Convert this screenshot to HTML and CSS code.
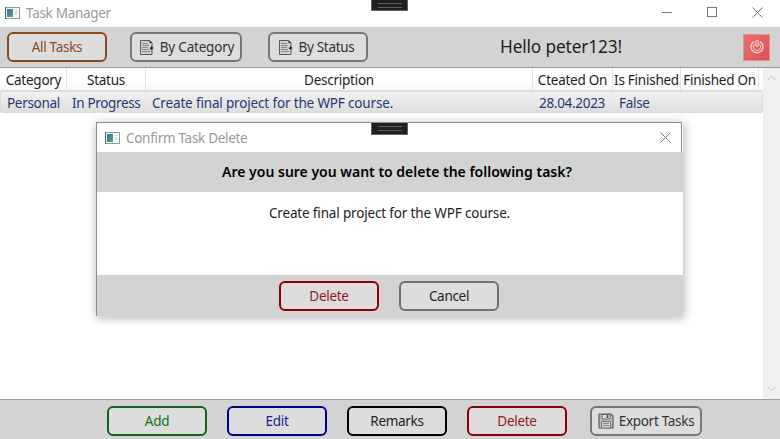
FILE: index.html
```
<!DOCTYPE html>
<html lang="en">
<head>
<meta charset="utf-8">
<title>Task Manager</title>
<link rel="stylesheet" href="styles.css">
</head>
<body>
<svg class="defs" width="0" height="0" aria-hidden="true">
  <defs>
    <linearGradient id="pane" x1="0" y1="0" x2="1" y2="1">
      <stop offset="0" stop-color="#3f6c94"/><stop offset="1" stop-color="#4fa684"/>
    </linearGradient>
    <symbol id="app" viewBox="0 0 15 12">
      <rect x=".5" y=".5" width="14" height="11" fill="#f7f9fa" stroke="#8b9ba3"/>
      <path d="M.5 0v12" stroke="#48606d"/>
      <rect x="2" y="2" width="6" height="8" fill="url(#pane)"/>
      <path d="M9.5 3.5h3M9.5 5.5h3M9.5 7.5h3" stroke="#cbd2d6"/>
    </symbol>
    <symbol id="doc" viewBox="0 0 15 17">
      <path d="M1.500 1.500h9l2.500 2.500v11.500H1.500z" fill="#cfcfcf" stroke="#5a5a5a"/>
      <path d="M10.500 1v3h3z" fill="#303030"/>
      <path d="M3 4.500h6M3 6.500h7M3 8.500h6M3 10.500h7M3 12.500h8" stroke="#8a8a8a"/>
      <path d="M11 8.500h1V7l2.500 2-2.500 2v-1h-1z" fill="#222"/>
    </symbol>
    <symbol id="disk" viewBox="0 0 16 16">
      <path d="M1 1h12l2 2v12H1z" fill="#bcbcbc" stroke="#5c5c5c" stroke-width="1.200"/>
      <path d="M4 1.500h8v4.500H4z" fill="#dedede" stroke="#666"/>
      <path d="M9.500 2v3" stroke="#444" stroke-width="1.500"/>
      <path d="M3.500 8.500h9V15h-9z" fill="#d4d4d4" stroke="#777"/>
      <path d="M5 10.500h6M5 12.500h6" stroke="#888"/>
    </symbol>
    <symbol id="close" viewBox="0 0 11 11"><path d="M.5.5l10 10M10.500.5l-10 10" stroke="#777" fill="none"/></symbol>
  </defs>
</svg>
<div class="window">
  <header class="titlebar">
    <svg class="app-icon"><use href="#app"/></svg>
    <span class="title">Task Manager</span>
    <div class="controls">
      <svg width="11" height="11"><path d="M0 5.500h10" stroke="#777"/></svg>
      <svg width="11" height="11"><rect x=".5" y=".5" width="9" height="9" fill="none" stroke="#777"/></svg>
      <svg width="11" height="11"><use href="#close"/></svg>
    </div>
    <div class="debug-tab"></div>
  </header>
  <div class="toolbar">
    <button class="btn brown">All Tasks</button>
    <button class="btn gray wide"><svg class="doc"><use href="#doc"/></svg>By Category</button>
    <button class="btn gray status"><svg class="doc"><use href="#doc"/></svg>By Status</button>
    <span class="hello">Hello peter123!</span>
    <button class="power" aria-label="Log out">
      <svg width="16" height="16" viewBox="0 0 16 16" fill="none" stroke="#ffdcdc">
        <path d="M5.200 2.500a6 6 0 1 0 5.600 0" stroke-width="1.200"/>
        <path d="M5.500 5.200a3.700 3.700 0 1 0 5 0" stroke-width="1"/>
        <rect x="6.800" y="1.500" width="2.400" height="6" rx="1.200"/>
      </svg>
    </button>
  </div>
  <main class="list">
    <div class="table">
      <div class="row head"><span>Category</span><span>Status</span><span>Description</span><span>Cteated On</span><span>Is Finished</span><span>Finished On</span></div>
      <div class="row item"><span>Personal</span><span class="progress">In Progress</span><span class="sentence">Create final project for the WPF course.</span><span>28.04.2023</span><span>False</span><span></span></div>
    </div>
    <div class="scroll">
      <svg width="9" height="6"><path d="M.7 5l3.800-4 3.800 4" fill="none" stroke="#c4c4c4"/></svg>
      <svg width="9" height="6"><path d="M.7 1l3.800 4 3.800-4" fill="none" stroke="#c4c4c4"/></svg>
    </div>
  </main>
  <footer class="footer">
    <button class="btn green">Add</button>
    <button class="btn blue">Edit</button>
    <button class="btn black">Remarks</button>
    <button class="btn red">Delete</button>
    <button class="btn gray wide"><svg class="disk"><use href="#disk"/></svg>Export Tasks</button>
  </footer>
  <section class="dialog">
    <div class="dialog-title">
      <svg class="app-icon"><use href="#app"/></svg>
      <span class="title">Confirm Task Delete</span>
      <svg class="dialog-close" width="11" height="11"><use href="#close"/></svg>
      <div class="debug-tab"></div>
    </div>
    <div class="question"><span>Are you sure you want to delete the following task?</span></div>
    <div class="message"><span class="sentence">Create final project for the WPF course.</span></div>
    <div class="actions"><button class="btn red">Delete</button><button class="btn dim">Cancel</button></div>
  </section>
</div>
</body>
</html>
```
FILE: styles.css
```
* { box-sizing: border-box; }
body { margin: 0; font: 13.5px/20px "Noto Sans", "Open Sans", sans-serif; letter-spacing: -.3px; color: #1d1d1d; }
svg { display: block; flex: none; }
.defs { position: absolute; }
.window { position: relative; width: 780px; height: 439px; overflow: hidden; background: #fff; display: flex; flex-direction: column; }
.titlebar { position: relative; height: 27px; flex: none; display: flex; align-items: center; padding: 0 17px 2px 5px; }
.app-icon { width: 15px; height: 12px; }
.title { margin-left: 6px; color: #999; }
.controls { margin-left: auto; display: flex; gap: 34px; }
.debug-tab { position: absolute; top: 0; left: 371px; width: 37px; height: 11px; background: #202020; border: solid #656565; border-width: 0 1px 1px; }
.debug-tab::after { content: ""; display: block; width: 24px; height: 3px; margin: 3px auto 0; border: solid #5c5c5c; border-width: 1px 0; }
.toolbar { height: 41px; flex: none; background: #d3d3d3; border-bottom: 1px solid #9a9b9d; display: flex; align-items: center; padding: 0 10px 0 7px; }
.btn { width: 100px; height: 30px; padding: 0; border: 2px solid; border-radius: 6px; background: #ddd; font: inherit; letter-spacing: inherit; display: flex; align-items: center; justify-content: center; flex: none; }
.wide { width: 112px; }
.toolbar .wide { margin: 0 26px 0 23px; letter-spacing: -.2px; padding-left: 1px; }
.brown { color: #8b4a1c; }
.gray { border-color: #777; color: #333; }
.dim { border-color: #707070; color: #222; }
.green { color: #14701c; border-color: #126313; }
.blue { color: #202092; border-color: #00008b; }
.black { color: #222; border-color: #000; }
.red { color: #921a1f; border-color: #8b0000; }
.doc { width: 15px; height: 17px; margin-right: 6px; }
.status .doc { margin-right: 5px; }
.status { padding-right: 3px; }
.disk { width: 16px; height: 16px; margin-right: 5px; }
.hello { margin-left: 132px; font-size: 17.3px; letter-spacing: -.15px; }
.power { width: 27px; height: 27px; margin-left: auto; padding: 0; border: 1px solid #eb8b8b; background: linear-gradient(135deg, #e76f72, #da5357); display: grid; place-items: center; }
.list { flex: 1; min-height: 0; display: flex; background: #fff; }
.table { flex: 1; }
.row { display: grid; grid-template-columns: 66px 79px 387px 80px 68px 78px; width: 763px; }
.row span { white-space: nowrap; }
.head { height: 23px; padding-left: 1px; line-height: 25px; background: linear-gradient(#fff 50%, #f7f8fa); border-bottom: 1px solid #dedede; text-align: center; letter-spacing: -.25px; }
.head span { border-right: 1px solid #e3e4e6; }
.item { height: 22px; color: #263878; background: linear-gradient(#f1f1f1, #dedede); border: 1px solid #dcdcdc; border-radius: 2px; }
.item span { padding-left: 6px; line-height: 22px; }
.item .progress { padding-left: 5px; letter-spacing: -.35px; }
.sentence { letter-spacing: -.16px; }
.scroll { width: 17px; background: #f0f0f0; display: flex; flex-direction: column; justify-content: space-between; align-items: center; padding: 7px 0; }
.footer { height: 40px; flex: none; border-top: 1px solid #9a9b9d; background: #d3d3d3; display: flex; align-items: center; gap: 20px; padding: 2px 0 0 107px; }
.footer .wide { margin-left: 3px; }
.dialog { position: absolute; left: 96px; top: 122px; width: 587px; height: 194px; background: #fff; border-left: 1px solid #8d8d8d; box-shadow: 1px 2px 9px 1px rgba(0, 0, 0, .25); display: flex; flex-direction: column; }
.dialog-title { position: relative; height: 30px; width: 585px; border: solid #8d8d8d; border-width: 1px 1px 0 0; display: flex; align-items: center; padding: 0 10px 0 8px; }
.dialog-close { margin-left: auto; }
.dialog-title .debug-tab { left: 274px; height: 12px; }
.question { height: 40px; background: #d3d3d3; color: #000; font-size: 14px; font-weight: 600; letter-spacing: 0; line-height: 40px; text-align: center; padding-left: 14px; }
.message { flex: 1; padding: 11px 1px 0 0; text-align: center; }
.actions { height: 41px; background: #d3d3d3; display: flex; justify-content: center; align-items: center; gap: 20px; padding-right: 2px; }
```
